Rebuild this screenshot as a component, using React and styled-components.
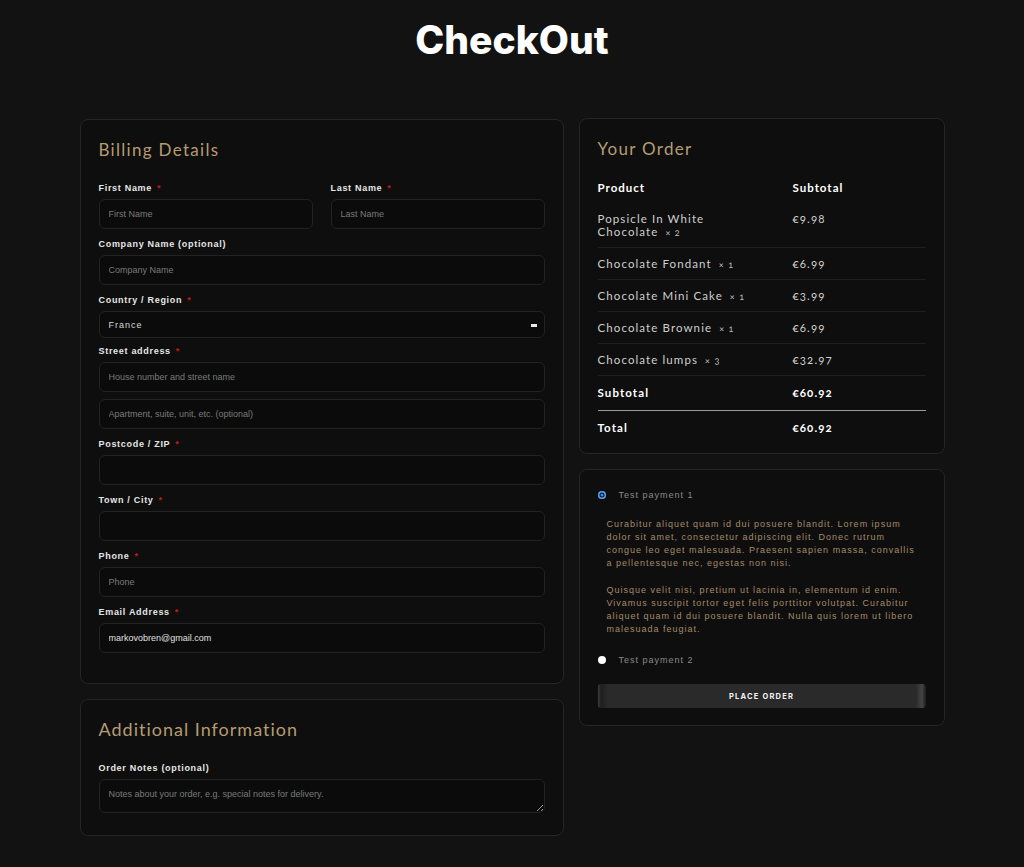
import styled, { createGlobalStyle } from 'styled-components';

const GlobalStyle = createGlobalStyle`
    body{
        margin: 0;
        background: #121212;
        font-family: 'Liberation Sans', Arial, sans-serif;
    }
    *{ box-sizing: border-box; }
`

const products = [
    { name: ['Popsicle In White', 'Chocolate'], qty: 2, price: '€9.98' },
    { name: ['Chocolate Fondant'], qty: 1, price: '€6.99' },
    { name: ['Chocolate Mini Cake'], qty: 1, price: '€3.99' },
    { name: ['Chocolate Brownie'], qty: 1, price: '€6.99' },
    { name: ['Chocolate lumps'], qty: 3, price: '€32.97' },
];

function Field({ label, required, placeholder, value, half }) {
    return (
        <FieldBox $half={half}>
            <Label>{label}{required && <Star>*</Star>}</Label>
            <Input placeholder={placeholder} defaultValue={value} />
        </FieldBox>
    )
}

function App() {
    return (
        <Page>
            <GlobalStyle />
            <Title>CheckOut</Title>

            <Layout>
                <Column>
                    <Card>
                        <Heading>Billing Details</Heading>
                        <Row>
                            <Field half label="First Name" required placeholder="First Name" />
                            <Field half label="Last Name" required placeholder="Last Name" />
                        </Row>
                        <Field label="Company Name (optional)" placeholder="Company Name" />
                        <FieldBox>
                            <Label>Country / Region<Star>*</Star></Label>
                            <Select>
                                France
                                <SelectMark />
                            </Select>
                        </FieldBox>
                        <FieldBox>
                            <Label>Street address<Star>*</Star></Label>
                            <Input placeholder="House number and street name" />
                            <Input $extra placeholder="Apartment, suite, unit, etc. (optional)" />
                        </FieldBox>
                        <Field label="Postcode / ZIP" required />
                        <Field label="Town / City" required />
                        <Field label="Phone" required placeholder="Phone" />
                        <Field label="Email Address" required value="markovobren@gmail.com" />
                    </Card>

                    <Card $extra>
                        <Heading $big>Additional Information</Heading>
                        <FieldBox>
                            <Label>Order Notes (optional)</Label>
                            <TextArea placeholder="Notes about your order, e.g. special notes for delivery." />
                        </FieldBox>
                    </Card>
                </Column>

                <Column $right>
                    <Card $order>
                        <Heading>Your Order</Heading>
                        <OrderTable>
                            <thead>
                                <tr>
                                    <Th>Product</Th>
                                    <Th>Subtotal</Th>
                                </tr>
                            </thead>
                            <tbody>
                                {products.map((p) => (
                                    <ItemRow key={p.name.join(' ')}>
                                        <Td>
                                            {p.name.map((line, i) => (
                                                <NameLine key={line}>
                                                    {line}
                                                    {i === p.name.length - 1 && <Qty>× {p.qty}</Qty>}
                                                </NameLine>
                                            ))}
                                        </Td>
                                        <Td>{p.price}</Td>
                                    </ItemRow>
                                ))}
                                <SumRow>
                                    <Td $bold>Subtotal</Td>
                                    <Td $bold>€60.92</Td>
                                </SumRow>
                                <TotalRow>
                                    <Td $bold>Total</Td>
                                    <Td $bold>€60.92</Td>
                                </TotalRow>
                            </tbody>
                        </OrderTable>
                    </Card>

                    <Card $payment>
                        <Method>
                            <Radio $checked />
                            Test payment 1
                        </Method>
                        <Description>
                            <p>Curabitur aliquet quam id dui posuere blandit. Lorem ipsum dolor sit amet, consectetur adipiscing elit. Donec rutrum congue leo eget malesuada. Praesent sapien massa, convallis a pellentesque nec, egestas non nisi.</p>
                            <p>Quisque velit nisi, pretium ut lacinia in, elementum id enim. Vivamus suscipit tortor eget felis porttitor volutpat. Curabitur aliquet quam id dui posuere blandit. Nulla quis lorem ut libero malesuada feugiat.</p>
                        </Description>
                        <Method>
                            <Radio />
                            Test payment 2
                        </Method>
                        <OrderButton>PLACE ORDER</OrderButton>
                    </Card>
                </Column>
            </Layout>
        </Page>
    )
}

const Page = styled.div`
    min-height: 867px;
    padding-bottom: 30px;
`

const Title = styled.h1`
    margin: 0;
    padding-top: 18px;
    margin-bottom: 57px;
    text-align: center;
    font-family: 'Inter', sans-serif;
    font-weight: 800;
    font-size: 39px;
    line-height: 44px;
    color: #fff;
`

const Layout = styled.div`
    display: grid;
    grid-template-columns: 484px 366px;
    gap: 15px;
    justify-content: center;
    align-items: start;
`

const Column = styled.div`
    display: flex;
    flex-direction: column;
    gap: 15px;
    margin-top: ${p => p.$right ? '-1px' : '0'};
`

const Card = styled.section`
    background: #0e0e0e;
    border: 1px solid #252525;
    border-radius: 8px;
    padding: ${p => p.$payment ? '19px 18px 17px 18px' : p.$order ? '19px 18px 10px 18px' : p.$extra ? '18px 18px 13px 18px' : '19px 18px 21px 18px'};
`

const Heading = styled.h2`
    margin: 0 0 ${p => p.$big ? '22px' : '21px'};
    font-family: 'Lato', sans-serif;
    font-weight: 400;
    font-size: ${p => p.$big ? '18px' : '17px'};
    line-height: 22px;
    letter-spacing: ${p => p.$big ? '1px' : '1.3px'};
    color: #b59c72;
`

const Row = styled.div`
    display: flex;
    gap: 18px;
`

const FieldBox = styled.div`
    flex: ${p => p.$half ? '1' : 'none'};
    display: flex;
    flex-direction: column;
    margin-bottom: 9px;
`

const Label = styled.label`
    font-size: 9px;
    line-height: 12px;
    font-weight: 700;
    letter-spacing: 0.7px;
    color: #e6e6e6;
    margin-bottom: 5px;
`

const Star = styled.span`
    color: #c41a1a;
    margin-left: 5px;
`

const Input = styled.input`
    height: 30px;
    width: 100%;
    margin-top: ${p => p.$extra ? '7px' : '0'};
    background: #0b0b0b;
    border: 1px solid #222;
    border-radius: 6px;
    padding: 0 9px;
    font-family: 'Liberation Sans', Arial, sans-serif;
    font-size: 9px;
    color: #e0e0e0;
    outline: none;

    &::placeholder{
        color: #7a7a7a;
    }
`

const Select = styled.div`
    position: relative;
    height: 27px;
    display: flex;
    align-items: center;
    background: #0b0b0b;
    border: 1px solid #222;
    border-radius: 6px;
    padding: 0 9px;
    font-size: 9px;
    letter-spacing: 1px;
    color: #d8d8d8;
    margin-bottom: -2px;
`

const SelectMark = styled.span`
    position: absolute;
    right: 7px;
    top: 12px;
    width: 6px;
    height: 3px;
    background: #e8e8e8;
`

const TextArea = styled.textarea`
    height: 34px;
    width: 100%;
    resize: vertical;
    background: #0b0b0b;
    border: 1px solid #222;
    border-radius: 6px;
    padding: 9px 9px;
    font-family: 'Liberation Sans', Arial, sans-serif;
    font-size: 9px;
    color: #e0e0e0;
    outline: none;

    &::placeholder{
        color: #7a7a7a;
    }
`

const OrderTable = styled.table`
    width: 100%;
    border-collapse: collapse;
    font-family: 'Lato', sans-serif;
    font-variant-numeric: oldstyle-nums;
    table-layout: fixed;

    th:first-child, td:first-child{
        width: 195px;
        padding-right: 12px;
    }
`

const Th = styled.th`
    text-align: left;
    font-size: 11.5px;
    line-height: 13px;
    font-weight: 700;
    letter-spacing: 1px;
    color: #fff;
    padding: 0 0 9px;
`

const Td = styled.td`
    text-align: left;
    vertical-align: top;
    font-size: 11.5px;
    line-height: 13px;
    font-weight: ${p => p.$bold ? 700 : 400};
    letter-spacing: 1.1px;
    color: ${p => p.$bold ? '#fff' : '#cfcfcf'};
    padding: 9px 0 9px;
`

const NameLine = styled.div`
    white-space: nowrap;
`

const Qty = styled.span`
    font-size: 9px;
    line-height: 1;
    margin-left: 7px;
    color: #bdbdbd;
`

const ItemRow = styled.tr`
    border-bottom: 1px solid #1f1f1f;
`

const SumRow = styled.tr`
    border-bottom: 1px solid #9a9a9a;

    td{
        padding: 10px 0 11px;
    }
`

const TotalRow = styled.tr`
    td{
        padding: 10px 0 9px;
    }
`

const Method = styled.div`
    display: flex;
    align-items: center;
    gap: 13px;
    font-size: 9px;
    line-height: 12px;
    letter-spacing: 1px;
    color: #8a8a8a;
`

const Radio = styled.span`
    width: 8px;
    height: 8px;
    border-radius: 50%;
    background: ${p => p.$checked ? '#3d8fef' : '#fff'};
    box-shadow: ${p => p.$checked ? 'inset 0 0 0 1.5px #5aa3f7, inset 0 0 0 2.5px #0e0e0e' : 'none'};
`

const Description = styled.div`
    padding: 17px 0 4px 9px;
    width: 322px;

    p{
        margin: 0 0 14px;
        font-size: 9px;
        line-height: 13px;
        letter-spacing: 1px;
        color: #a48b68;
    }
`

const OrderButton = styled.button`
    display: block;
    width: 100%;
    height: 24px;
    margin-top: 18px;
    border: none;
    border-radius: 3px;
    background: linear-gradient(90deg, #3e3e3e 0px, #1e1e1e 3px, #2a2a2a 10px, #2a2a2a calc(100% - 10px), #454545 calc(100% - 4px), #1a1a1a 100%);
    color: #f2f2f2;
    font-family: 'Inter', sans-serif;
    font-weight: 700;
    font-size: 7.5px;
    letter-spacing: 1.2px;
    cursor: pointer;
`

export default App;
